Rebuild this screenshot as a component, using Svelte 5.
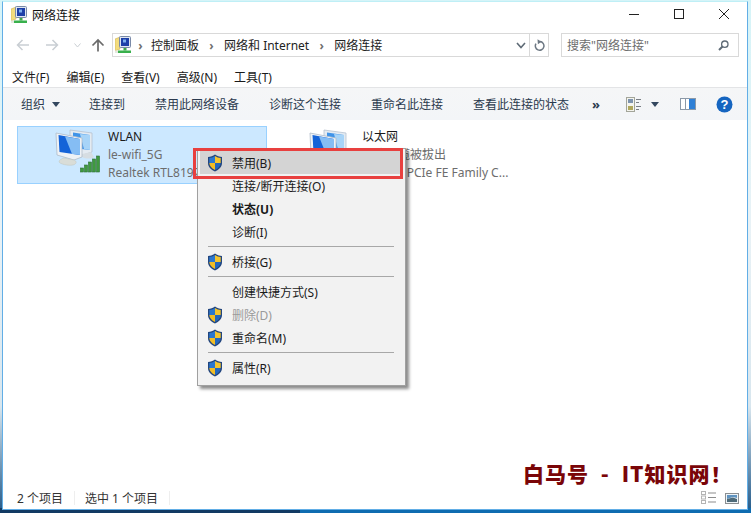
<script lang="ts">
  const toolbar = ["连接到", "禁用此网络设备", "诊断这个连接", "重命名此连接", "查看此连接的状态"];
  const menus = ["文件(F)", "编辑(E)", "查看(V)", "高级(N)", "工具(T)"];

  // sep rows are 7px, everything else 23px
  const items = [
    { label: "禁用(B)", shield: true, active: true },
    { label: "连接/断开连接(O)" },
    { label: "状态(U)", bold: true },
    { label: "诊断(I)" },
    { sep: true },
    { label: "桥接(G)", shield: true },
    { sep: true },
    { label: "创建快捷方式(S)" },
    { label: "删除(D)", shield: true, disabled: true },
    { label: "重命名(M)", shield: true },
    { sep: true },
    { label: "属性(R)", shield: true },
  ];
</script>

{#snippet shield()}
  <svg class="shield" width="16" height="18" viewBox="0 0 16 18">
    <path d="M8 .5 C6 2 3.500 2.800 1 3 V9 C1 13 4 15.800 8 17.500 C12 15.800 15 13 15 9 V3 C12.500 2.800 10 2 8 .5Z" fill="#23467e" />
    <path d="M8 2 C6.300 3.200 4.300 3.900 2.300 4.100 V9 H8Z" fill="#2b78cf" />
    <path d="M8 2 C9.700 3.200 11.700 3.900 13.700 4.100 V9 H8Z" fill="#f4c52e" />
    <path d="M2.300 9 C2.500 12 4.800 14.500 8 16 V9Z" fill="#f2bd24" />
    <path d="M13.700 9 C13.500 12 11.200 14.500 8 16 V9Z" fill="#2467bd" />
  </svg>
{/snippet}

{#snippet small_net()}
  <svg width="16" height="18" viewBox="0 0 16 18">
    <path d="M0 3 L5 1 V13 L0 15Z" fill="#f3dc7e" stroke="#cdb155" stroke-width=".6" />
    <rect x="4.500" y=".5" width="11" height="11" rx="1" fill="#dfe6f0" stroke="#7a8aa8" />
    <rect x="6" y="2" width="8" height="8" fill="#1d3fa8" />
    <rect x="8" y="3.500" width="3" height="3" fill="#7fb0ee" />
    <rect x="8.500" y="12" width="3" height="2.500" fill="#3ea84a" />
    <rect x="3" y="14.500" width="13" height="2.500" fill="#38b04c" />
    <rect x="0" y="14.500" width="3" height="2.500" fill="#e4e7df" />
  </svg>
{/snippet}

{#snippet monitors(wifi)}
  <svg class="netico" width="50" height="48" viewBox="0 0 50 48">
    <!-- back monitor -->
    <path d="M17 3 L39 6 V25 L30 28 L17 24Z" fill="#e4ebf2" stroke="#b6c2cf" stroke-width=".8" />
    <path d="M20 5.500 L37 8 V23 L20 21Z" fill="#3f93e8" />
    <path d="M27 7 L37 8 V23 L31 22Z" fill="#a7d4f8" />
    <path d="M29 27 L38 25 L41 30 C38 32 33 32 29 30Z" fill="#d6dde2" />
    <!-- front monitor -->
    <path d="M3 6 L29 11 V30 L21 33 L4 28Z" fill="#eef2f6" stroke="#aebbc9" stroke-width=".8" />
    <path d="M5.500 8 L27 12 V28 L6.500 25Z" fill="#1463d8" />
    <path d="M12 9.500 L27 12 V28 L19 27Z" fill="#85bdf4" />
    <path d="M11 31 L21 33 C24 34 24 37 20 38 C15 39 7 37 6 35 C6 33 8 32 11 31Z" fill="#d9ddd8" stroke="#bfc5bf" stroke-width=".5" />
    {#if wifi}
      <g fill="#3f9a3f" stroke="#2c6e33" stroke-width=".6">
        <rect x="27.500" y="41" width="3" height="4" />
        <rect x="31.500" y="38" width="3" height="7" />
        <rect x="35.500" y="35" width="3" height="10" />
        <rect x="39.500" y="32" width="3" height="13" />
        <rect x="43.500" y="29" width="3" height="16" />
      </g>
    {/if}
  </svg>
{/snippet}

<div class="desktop">
  <div class="window">
    <div class="title">
      {@render small_net()}
      <span class="title-text">网络连接</span>
      <div class="caption">
        <svg width="12" height="12" viewBox="0 0 12 12"><path d="M1 6.500 H11" stroke="#222" /></svg>
        <svg width="12" height="12" viewBox="0 0 12 12"><rect x="1.500" y="1.500" width="9" height="9" fill="none" stroke="#222" /></svg>
        <svg width="12" height="12" viewBox="0 0 12 12"><path d="M1 1 L11 11 M11 1 L1 11" stroke="#222" /></svg>
      </div>
    </div>

    <div class="nav">
      <svg class="arrow" width="14" height="12" viewBox="0 0 14 12"><path d="M13 6 H2 M6.500 1 L1.500 6 L6.500 11" fill="none" stroke="#c9ced3" stroke-width="1.500" /></svg>
      <svg class="arrow fwd" width="14" height="12" viewBox="0 0 14 12"><path d="M1 6 H12 M7.500 1 L12.500 6 L7.500 11" fill="none" stroke="#c9ced3" stroke-width="1.500" /></svg>
      <svg class="arrow hist" width="7" height="5" viewBox="0 0 7 5"><path d="M.5 .5 L3.500 4 L6.500 .5" fill="none" stroke="#c9ced3" /></svg>
      <svg class="arrow up" width="14" height="14" viewBox="0 0 14 14"><path d="M7 13.500 V2 M1.500 7.500 L7 2 L12.500 7.500" fill="none" stroke="#6a6a6a" stroke-width="1.700" /></svg>

      <div class="address">
        {@render small_net()}
        <span class="crumb-sep">›</span>
        <span>控制面板</span>
        <span class="crumb-sep">›</span>
        <span>网络和 Internet</span>
        <span class="crumb-sep">›</span>
        <span>网络连接</span>
        <div class="addr-end">
          <svg width="10" height="7" viewBox="0 0 10 7"><path d="M1 1 L5 5.500 L9 1" fill="none" stroke="#5f6b76" stroke-width="1.600" /></svg>
          <span class="refresh">
            <svg width="11" height="13" viewBox="0 0 11 13"><path d="M6 2.600 A4.300 4.300 0 1 1 2 4.600" fill="none" stroke="#6d7883" stroke-width="1.500" /><path d="M3.500 .3 L7.500 2.700 L3.900 5.200Z" fill="#6d7883" /></svg>
          </span>
        </div>
      </div>

      <div class="search">
        <span>搜索"网络连接"</span>
        <svg width="11" height="11" viewBox="0 0 11 11"><circle cx="6.800" cy="4.200" r="3.200" fill="none" stroke="#5f6b76" stroke-width="1.300" /><path d="M4.500 6.500 L1 10" stroke="#5f6b76" stroke-width="2" /></svg>
      </div>
    </div>

    <div class="menubar">
      {#each menus as m}
        <span>{m}</span>
      {/each}
    </div>

    <div class="toolbar">
      <span class="organize">组织<i class="caret"></i></span>
      {#each toolbar as t}
        <span>{t}</span>
      {/each}
      <span class="more">»</span>
      <div class="tool-icons">
        <svg class="views" width="16" height="15" viewBox="0 0 16 15">
          <rect x=".5" y=".5" width="8" height="14" fill="#f4f4ee" stroke="#a3a59a" />
          <rect x="2" y="2" width="5" height="4" fill="#7d93ad" />
          <rect x="2" y="9" width="5" height="4" fill="#b0a85d" />
          <path d="M10 2.500 H15 M10 5.500 H13 M10 9.500 H15 M10 12.500 H13" stroke="#7a7f85" />
        </svg>
        <i class="caret dark"></i>
        <svg class="pane" width="16" height="12" viewBox="0 0 16 12">
          <rect x=".5" y=".5" width="15" height="11" fill="#fff" stroke="#8b99a8" />
          <path d="M5.500 .5 V11.500" stroke="#8b99a8" />
          <rect x="9" y="1" width="6" height="10" fill="#2f80d6" />
        </svg>
        <svg class="help" width="17" height="17" viewBox="0 0 17 17">
          <circle cx="8.500" cy="8.500" r="8" fill="#1565c0" />
          <text x="8.500" y="13.300" text-anchor="middle" font-size="13" font-weight="700" fill="#fff" font-family="Liberation Sans, sans-serif">?</text>
        </svg>
      </div>
    </div>

    <div class="content">
      <div class="item selected">
        {@render monitors(true)}
        <div class="lines">
          <span class="name">WLAN</span>
          <span>le-wifi_5G</span>
          <span>Realtek RTL8192EU Wireless...</span>
        </div>
      </div>
      <div class="item">
        {@render monitors(false)}
        <div class="lines">
          <span class="name">以太网</span>
          <span>网络电缆被拔出</span>
          <span>Realtek PCIe FE Family C...</span>
        </div>
      </div>
    </div>

    <div class="status">
      <span>2 个项目</span>
      <span class="divider"></span>
      <span>选中 1 个项目</span>
      <span class="divider"></span>
      <div class="status-icons">
        <svg width="16" height="14" viewBox="0 0 16 14">
          <rect x=".5" y=".5" width="4" height="3" fill="#fff" stroke="#b4b4b4" />
          <rect x=".5" y="5" width="4" height="3" fill="#fff" stroke="#b4b4b4" />
          <rect x=".5" y="9.500" width="4" height="3" fill="#fff" stroke="#b4b4b4" />
          <path d="M7 2 H15 M7 6.500 H15 M7 11 H15" stroke="#8d8d8d" />
        </svg>
        <svg width="14" height="11" viewBox="0 0 14 11">
          <rect x=".5" y=".5" width="13" height="10" fill="#eef4f8" stroke="#8b8f92" />
          <path d="M2 2 H12 V5 L8 4 L2 6Z" fill="#5f93c0" />
          <path d="M2 6 L8 4.500 L12 6 V9 H2Z" fill="#4e6a78" />
        </svg>
      </div>
    </div>
  </div>

  <div class="context">
    {#each items as it}
      {#if it.sep}
        <div class="sep"></div>
      {:else}
        <div class="row" class:active={it.active} class:bold={it.bold} class:disabled={it.disabled}>
          <span class="slot">
            {#if it.shield}{@render shield()}{/if}
          </span>
          <span>{it.label}</span>
        </div>
      {/if}
    {/each}
  </div>

  <div class="redbox"></div>
  <div class="watermark">白马号 - IT知识网<span class="bang"> ！</span></div>
</div>

<style>
  :global(body) {
    font-family: "Noto Sans", "Noto Sans CJK SC", sans-serif;
    font-size: 12px;
  }

  .desktop {
    position: relative;
    width: 751px;
    height: 513px;
    overflow: hidden;
    box-sizing: border-box;
    padding: 1px 3px 3px 2px;
    background: linear-gradient(90deg, #123a63 0 40%, #0f6cb0 40%);
  }
  .desktop::before {
    content: "";
    position: absolute;
    inset: 0 0 5px 0;
    background: linear-gradient(#d5f4f8, #e9f2f6 45%, #d8e6ee 80%, #2a5f8d);
  }

  .window {
    position: relative;
    box-sizing: border-box;
    height: 509px;
    display: flex;
    flex-direction: column;
    background: #fff;
    border: 1px solid #62aee6;
    border-top-color: #bfeff6;
    color: #1a1a1a;
  }

  .title {
    display: flex;
    align-items: center;
    gap: 5px;
    box-sizing: border-box;
    height: 27px;
    flex: none;
    padding: 0 0 2px 8px;
  }
  .title-text {
    font-size: 12px;
    color: #111;
  }
  .caption {
    margin-left: auto;
    display: flex;
    gap: 33px;
    padding-right: 17px;
    margin-top: -1px;
  }

  .nav {
    display: flex;
    align-items: center;
    height: 26px;
    flex: none;
    margin-top: 3px;
    padding-left: 13px;
  }
  .fwd { margin-left: 15px; }
  .hist { margin-left: 15px; }
  .up { margin-left: 10px; }

  .address {
    display: flex;
    align-items: center;
    box-sizing: border-box;
    width: 437px;
    height: 24px;
    margin-left: 7px;
    padding-left: 2px;
    border: 1px solid #d9d9d9;
    color: #222;
  }
  .crumb-sep {
    width: 13px;
    text-align: center;
    color: #707070;
    font-weight: 700;
  }
  .address > span:not(.crumb-sep) {
    margin: 0 6px;
  }
  .address > .crumb-sep:first-of-type {
    margin-left: 3px;
    margin-right: -2px;
  }
  .addr-end {
    margin-left: auto;
    display: flex;
    align-items: center;
    height: 100%;
    gap: 3px;
  }
  .refresh {
    display: flex;
    align-items: center;
    height: 100%;
    padding: 0 3px 0 4px;
    border-left: 1px solid #d9d9d9;
  }

  .search {
    display: flex;
    align-items: center;
    justify-content: space-between;
    box-sizing: border-box;
    width: 178px;
    height: 24px;
    margin-left: 12px;
    padding: 0 9px 0 9px;
    border: 1px solid #d9d9d9;
    color: #6d6d6d;
  }
  .search > span {
    margin-left: -4px;
  }

  .menubar {
    display: flex;
    align-items: center;
    gap: 17px;
    height: 20px;
    flex: none;
    margin-top: 9px;
    padding-left: 9px;
    color: #1a1a1a;
  }

  .toolbar {
    display: flex;
    align-items: center;
    gap: 30px;
    height: 32px;
    flex: none;
    padding-left: 18px;
    background: linear-gradient(#f5f6f7, #f3f5f8);
    border-top: 1px solid #e3e4e6;
    color: #2b3a4e;
  }
  .organize {
    display: flex;
    align-items: center;
    margin-right: -1px;
  }
  .caret {
    display: inline-block;
    width: 0;
    height: 0;
    margin-left: 7px;
    border: 4px solid transparent;
    border-top: 5px solid #33475f;
    border-bottom: 0;
  }
  .more {
    margin-left: -7px;
    font-weight: 700;
    font-size: 13px;
  }
  .tool-icons {
    display: flex;
    align-items: center;
    margin-left: -4px;
  }
  .tool-icons .caret {
    margin-left: 9px;
  }
  .pane { margin-left: 21px; }
  .help { margin-left: 20px; }

  .content {
    flex: 1;
    display: flex;
    gap: 4px;
    align-items: flex-start;
    padding: 6px 0 0 14px;
    min-height: 0;
  }
  .item {
    position: relative;
    box-sizing: border-box;
    width: 250px;
    height: 58px;
    display: flex;
    border: 1px solid transparent;
  }
  .item.selected {
    background: #cce8ff;
    border-color: #99d1ff;
  }
  .netico {
    flex: none;
    margin: 0 0 0 35px;
  }
  .lines {
    display: flex;
    flex-direction: column;
    margin-left: 5px;
    padding-top: 1px;
    color: #6d6d6d;
    line-height: 18px;
    white-space: nowrap;
  }
  .name {
    color: #1a1a1a;
  }

  .status {
    display: flex;
    align-items: center;
    height: 22px;
    flex: none;
    padding-left: 14px;
    color: #333;
  }
  .divider {
    width: 1px;
    height: 14px;
    margin: 0 10px 0 11px;
    background: #eeeeee;
  }
  .status-icons {
    margin-left: auto;
    display: flex;
    align-items: center;
    gap: 8px;
    padding-right: 8px;
  }

  .context {
    position: absolute;
    left: 197px;
    top: 148px;
    box-sizing: border-box;
    width: 209px;
    height: 238px;
    padding: 2px 2px;
    background: #f2f2f2;
    border: 1px solid #a0a0a0;
    box-shadow: 3px 3px 3px rgba(0, 0, 0, 0.45);
    color: #1a1a1a;
  }
  .row {
    display: flex;
    align-items: center;
    height: 23px;
  }
  .row.active {
    background: #d4d4d4;
  }
  .row.bold {
    font-weight: 700;
  }
  .row.disabled {
    color: #9a9a9a;
  }
  .slot {
    display: flex;
    align-items: center;
    width: 32px;
  }
  .shield {
    margin-left: 7px;
  }
  .sep {
    height: 1px;
    margin: 3px 9px 3px 8px;
    background: #a8a8a8;
  }

  .redbox {
    position: absolute;
    left: 193px;
    top: 148px;
    box-sizing: border-box;
    width: 210px;
    height: 31px;
    border: 3px solid #e8403f;
  }

  .watermark {
    position: absolute;
    left: 523px;
    top: 458px;
    font-family: "Noto Sans CJK SC", sans-serif;
    font-size: 21px;
    font-weight: 900;
    line-height: 30px;
    letter-spacing: 1px;
    word-spacing: 6px;
    white-space: pre;
    color: #7a0508;
  }
  .bang {
    word-spacing: 0;
  }
</style>
